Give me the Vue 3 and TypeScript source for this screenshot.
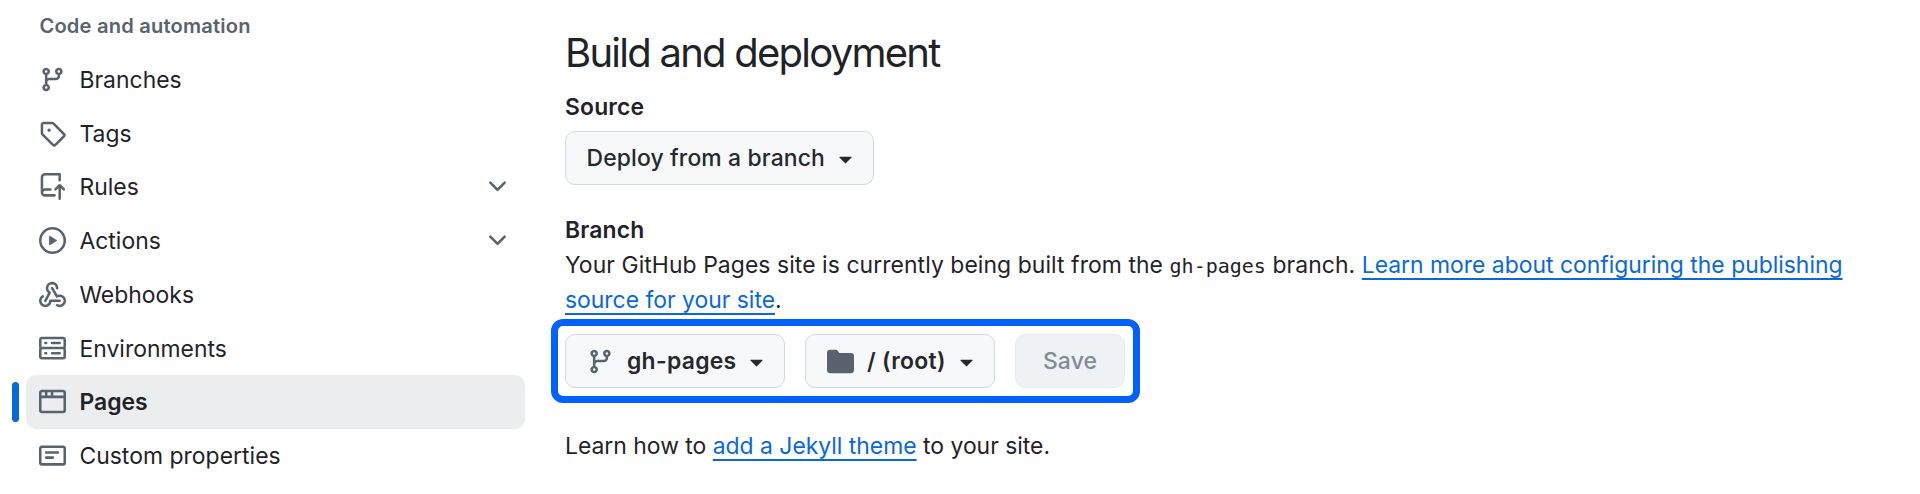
<script setup lang="ts">
interface NavItem {
  label: string
  key: string
  icon: string
  expandable?: boolean
  active?: boolean
}

const branchIcon =
  'M9.5 3.25a2.25 2.25 0 1 1 3 2.122V6A2.5 2.5 0 0 1 10 8.5H6a1 1 0 0 0-1 1v1.128a2.251 2.251 0 1 1-1.5 0V5.372a2.25 2.25 0 1 1 1.5 0v1.836A2.493 2.493 0 0 1 6 7h4a1 1 0 0 0 1-1v-.628A2.25 2.25 0 0 1 9.5 3.25Zm-6 0a.75.75 0 1 0 1.5 0 .75.75 0 0 0-1.5 0Zm8.25-.75a.75.75 0 1 0 0 1.5.75.75 0 0 0 0-1.5ZM4.25 12a.75.75 0 1 0 0 1.5.75.75 0 0 0 0-1.5Z'

const caretIcon =
  'm4.427 7.427 3.396 3.396a.25.25 0 0 0 .354 0l3.396-3.396A.25.25 0 0 0 11.396 7H4.604a.25.25 0 0 0-.177.427Z'

const items: NavItem[] = [
  { key: 'branches', label: 'Branches', icon: branchIcon },
  {
    key: 'tags',
    label: 'Tags',
    icon: 'M1 7.775V2.75C1 1.784 1.784 1 2.75 1h5.025c.464 0 .91.184 1.238.513l6.25 6.25a1.75 1.75 0 0 1 0 2.474l-5.026 5.026a1.75 1.75 0 0 1-2.474 0l-6.25-6.25A1.752 1.752 0 0 1 1 7.775Zm1.5 0c0 .066.026.13.073.177l6.25 6.25a.25.25 0 0 0 .354 0l5.025-5.025a.25.25 0 0 0 0-.354l-6.25-6.25a.25.25 0 0 0-.177-.073H2.75a.25.25 0 0 0-.25.25ZM6 5a1 1 0 1 1 0 2 1 1 0 0 1 0-2Z',
  },
  {
    key: 'rules',
    label: 'Rules',
    expandable: true,
    icon: 'M1 2.5A2.5 2.5 0 0 1 3.5 0h8.75a.75.75 0 0 1 .75.75v3.5a.75.75 0 0 1-1.5 0V1.5h-8a1 1 0 0 0-1 1v6.708A2.493 2.493 0 0 1 3.5 9h3.25a.75.75 0 0 1 0 1.5H3.5a1 1 0 0 0 0 2h5.75a.75.75 0 0 1 0 1.5H3.5A2.5 2.5 0 0 1 1 11.5Zm13.23 7.79h-.001l-1.224-1.224v6.184a.75.75 0 0 1-1.5 0V9.066L10.28 10.29a.75.75 0 0 1-1.06-1.061l2.505-2.504a.75.75 0 0 1 1.06 0L15.29 9.23a.751.751 0 0 1-.018 1.042.751.751 0 0 1-1.042.018Z',
  },
  {
    key: 'actions',
    label: 'Actions',
    expandable: true,
    icon: 'M8 0a8 8 0 1 1 0 16A8 8 0 0 1 8 0ZM1.5 8a6.5 6.5 0 1 0 13 0 6.5 6.5 0 0 0-13 0Zm4.879-2.773 4.264 2.559a.25.25 0 0 1 0 .428l-4.264 2.559A.25.25 0 0 1 6 10.559V5.442a.25.25 0 0 1 .379-.215Z',
  },
  {
    key: 'webhooks',
    label: 'Webhooks',
    icon: 'M5.5 4.25a2.25 2.25 0 0 1 4.5 0 .75.75 0 0 0 1.5 0 3.75 3.75 0 1 0-6.14 2.889l-2.272 4.258a.75.75 0 0 0 1.324.706L7 7.25a.75.75 0 0 0-.309-1.015A2.25 2.25 0 0 1 5.5 4.25ZM7.364 3.607a.75.75 0 0 1 1.03.257l2.608 4.349a3.75 3.75 0 1 1-.628 6.785.75.75 0 0 1 .752-1.299 2.25 2.25 0 1 0-.033-3.88.75.75 0 0 1-1.03-.256L7.107 4.636a.75.75 0 0 1 .257-1.03ZM2.9 8.776A.75.75 0 0 1 2.625 9.8 2.25 2.25 0 1 0 6 11.75a.75.75 0 0 1 .75-.751h5.5a.75.75 0 0 1 0 1.5H7.425a3.751 3.751 0 1 1-5.55-3.998.75.75 0 0 1 1.024.274Z',
  },
  {
    key: 'environments',
    label: 'Environments',
    icon: 'M1.75 1h12.5c.966 0 1.75.784 1.75 1.75v4c0 .372-.116.717-.314 1 .198.283.314.628.314 1v4a1.75 1.75 0 0 1-1.75 1.75H1.75A1.75 1.75 0 0 1 0 12.75v-4c0-.358.109-.707.314-1a1.739 1.739 0 0 1-.314-1v-4C0 1.784.784 1 1.75 1ZM1.5 2.75v4c0 .138.112.25.25.25h12.5a.25.25 0 0 0 .25-.25v-4a.25.25 0 0 0-.25-.25H1.75a.25.25 0 0 0-.25.25Zm.25 5.75a.25.25 0 0 0-.25.25v4c0 .138.112.25.25.25h12.5a.25.25 0 0 0 .25-.25v-4a.25.25 0 0 0-.25-.25ZM7 4.75A.75.75 0 0 1 7.75 4h4.5a.75.75 0 0 1 0 1.5h-4.5A.75.75 0 0 1 7 4.75ZM7.75 10h4.5a.75.75 0 0 1 0 1.5h-4.5a.75.75 0 0 1 0-1.5ZM3 4.75A.75.75 0 0 1 3.75 4h.5a.75.75 0 0 1 0 1.5h-.5A.75.75 0 0 1 3 4.75ZM3.75 10h.5a.75.75 0 0 1 0 1.5h-.5a.75.75 0 0 1 0-1.5Z',
  },
  {
    key: 'pages',
    label: 'Pages',
    active: true,
    icon: 'M0 2.75C0 1.784.784 1 1.75 1h12.5c.966 0 1.75.784 1.75 1.75v10.5A1.75 1.75 0 0 1 14.25 15H1.75A1.75 1.75 0 0 1 0 13.25ZM14.5 6h-13v7.25c0 .138.112.25.25.25h12.5a.25.25 0 0 0 .25-.25Zm-6-3.5v2h6V2.75a.25.25 0 0 0-.25-.25ZM5 2.5v2h2v-2Zm-3.25 0a.25.25 0 0 0-.25.25V4.5h2v-2Z',
  },
  {
    key: 'properties',
    label: 'Custom properties',
    icon: 'M0 3.75C0 2.784.784 2 1.75 2h12.5c.966 0 1.75.784 1.75 1.75v8.5A1.75 1.75 0 0 1 14.25 14H1.75A1.75 1.75 0 0 1 0 12.25Zm1.75-.25a.25.25 0 0 0-.25.25v8.5c0 .138.112.25.25.25h12.5a.25.25 0 0 0 .25-.25v-8.5a.25.25 0 0 0-.25-.25ZM3.5 6.25a.75.75 0 0 1 .75-.75h7a.75.75 0 0 1 0 1.5h-7a.75.75 0 0 1-.75-.75Zm.75 2.25h4a.75.75 0 0 1 0 1.5h-4a.75.75 0 0 1 0-1.5Z',
  },
]
</script>

<template>
  <div class="page">
    <nav class="sidebar">
      <h3 class="group-title">Code and automation</h3>
      <ul class="nav-list">
        <li v-for="item in items" :key="item.key" class="nav-item" :class="{ active: item.active }">
          <svg class="icon" viewBox="0 0 16 16"><path :d="item.icon" /></svg>
          <span class="nav-label">{{ item.label }}</span>
          <svg v-if="item.expandable" class="icon" viewBox="0 0 16 16">
            <path d="M12.78 5.22a.749.749 0 0 1 0 1.06l-4.25 4.25a.749.749 0 0 1-1.06 0L3.22 6.28a.749.749 0 1 1 1.06-1.06L8 8.939l3.72-3.719a.749.749 0 0 1 1.06 0Z" />
          </svg>
        </li>
      </ul>
    </nav>

    <main class="content">
      <h2 class="title">Build and deployment</h2>
      <h4 class="label source">Source</h4>
      <button class="btn deploy" type="button">
        <span class="deploy-text">Deploy from a branch</span>
        <svg class="icon caret" viewBox="0 0 16 16"><path :d="caretIcon" /></svg>
      </button>
      <h4 class="label branch">Branch</h4>
      <p class="text">
        <span class="intro">Your GitHub Pages site is currently being built from the </span><code>gh-pages</code><span class="intro"> branch. </span><a class="link">Learn more about configuring the publishing</a><br />
        <a class="link">source for your site</a>.
      </p>
      <div class="highlight">
        <button class="btn ref" type="button">
          <svg class="icon" viewBox="0 0 16 16"><path :d="branchIcon" /></svg>
          <span class="ref-text">gh-pages</span>
          <svg class="icon caret" viewBox="0 0 16 16"><path :d="caretIcon" /></svg>
        </button>
        <button class="btn folder" type="button">
          <svg class="icon" viewBox="0 0 16 16">
            <path d="M1.75 1A1.75 1.75 0 0 0 0 2.75v10.5C0 14.216.784 15 1.75 15h12.5A1.75 1.75 0 0 0 16 13.25v-8.5A1.75 1.75 0 0 0 14.25 3H7.5a.25.25 0 0 1-.2-.1l-.9-1.2C6.07 1.26 5.55 1 5 1H1.75Z" />
          </svg>
          <span class="folder-text">/ (root)</span>
          <svg class="icon caret" viewBox="0 0 16 16"><path :d="caretIcon" /></svg>
        </button>
        <button class="btn save" type="button" disabled>Save</button>
      </div>
      <p class="text footer">Learn how to <a class="link">add a Jekyll theme</a> to your site.</p>
    </main>
  </div>
</template>

<style>
body {
  background: #fff;
}
</style>

<style scoped>
.page {
  display: flex;
  height: 494px;
  overflow: hidden;
  background: #fff;
  color: #1f2328;
  font-family: Inter, 'Liberation Sans', sans-serif;
  font-size: 22.9px;
}

h2,
h3,
h4,
p,
ul {
  margin: 0;
  padding: 0;
}

.sidebar {
  width: 499px;
  margin-left: 26px;
  flex: none;
}

.group-title {
  box-sizing: border-box;
  height: 52.6px;
  padding: 1px 0 0 13.4px;
  color: #59636e;
  font-size: 20.1px;
  font-weight: 600;
  line-height: 50px;
  letter-spacing: 0.2px;
}

.nav-list {
  list-style: none;
}

.nav-item {
  position: relative;
  display: flex;
  align-items: center;
  height: 53.76px;
  padding: 0 14px 0 13.4px;
  border-radius: 10px;
}

.nav-item.active {
  background: #ebedef;
  font-weight: 600;
}

.nav-item.active::before {
  content: '';
  position: absolute;
  left: -14px;
  top: 7px;
  width: 7px;
  height: 40px;
  border-radius: 4px;
  background: #0969da;
}

.icon {
  width: 27px;
  height: 27px;
  flex: none;
  fill: #59636e;
}

.nav-label {
  flex: 1;
  margin-left: 13px;
  padding-top: 1px;
  letter-spacing: 0.04px;
  white-space: nowrap;
}

.content {
  width: 1300px;
  margin-left: 40px;
}

.title {
  box-sizing: border-box;
  height: 89px;
  padding-top: 26px;
  font-size: 40px;
  font-weight: 400;
  line-height: 54px;
  letter-spacing: -1.75px;
}

.label {
  font-size: 22.9px;
  font-weight: 600;
  line-height: 36px;
  letter-spacing: 0.15px;
}

.label.source {
  height: 42px;
}

.btn {
  display: flex;
  align-items: center;
  box-sizing: border-box;
  height: 54px;
  padding: 0 14px 0 20.5px;
  border: 1px solid #d1d9e0;
  border-radius: 10px;
  background: #f6f8fa;
  color: #25292e;
  font-family: inherit;
  font-size: 22.9px;
  font-weight: 500;
  line-height: 35px;
  letter-spacing: 0.14px;
  white-space: nowrap;
}

.caret {
  margin-left: auto;
  fill: #25292e;
}

.deploy {
  width: 309px;
}

.label.branch {
  height: 35px;
  margin-top: 27px;
}

.text {
  line-height: 35px;
  white-space: nowrap;
}

.btn + .label + .text {
  padding-top: 1px;
}

.intro {
  letter-spacing: 0.08px;
}

code {
  font-family: 'DejaVu Sans Mono', monospace;
  font-size: 20px;
  line-height: 1;
}

.link {
  color: #0969da;
  text-decoration: underline;
  text-decoration-thickness: 2px;
  text-decoration-skip-ink: none;
  text-underline-offset: 5px;
}

.highlight {
  display: flex;
  box-sizing: border-box;
  width: 589px;
  height: 84px;
  margin-top: 1px;
  margin-left: -14px;
  padding: 8px 7px;
  border: 7px solid #0061ff;
  border-radius: 12px;
}

.ref {
  width: 220px;
  font-weight: 600;
}

.ref-text {
  margin-left: 13.5px;
  letter-spacing: 0.3px;
}

.folder {
  width: 190px;
  margin-left: 20px;
  font-weight: 600;
}

.folder-text {
  margin-left: 13.5px;
  letter-spacing: 0.3px;
}

.save {
  width: 110px;
  margin-left: 20px;
  padding: 0;
  justify-content: center;
  border-color: #e6eaef;
  background: #eff2f5;
  color: #818b98;
}

.footer {
  margin-top: 26px;
}
</style>
